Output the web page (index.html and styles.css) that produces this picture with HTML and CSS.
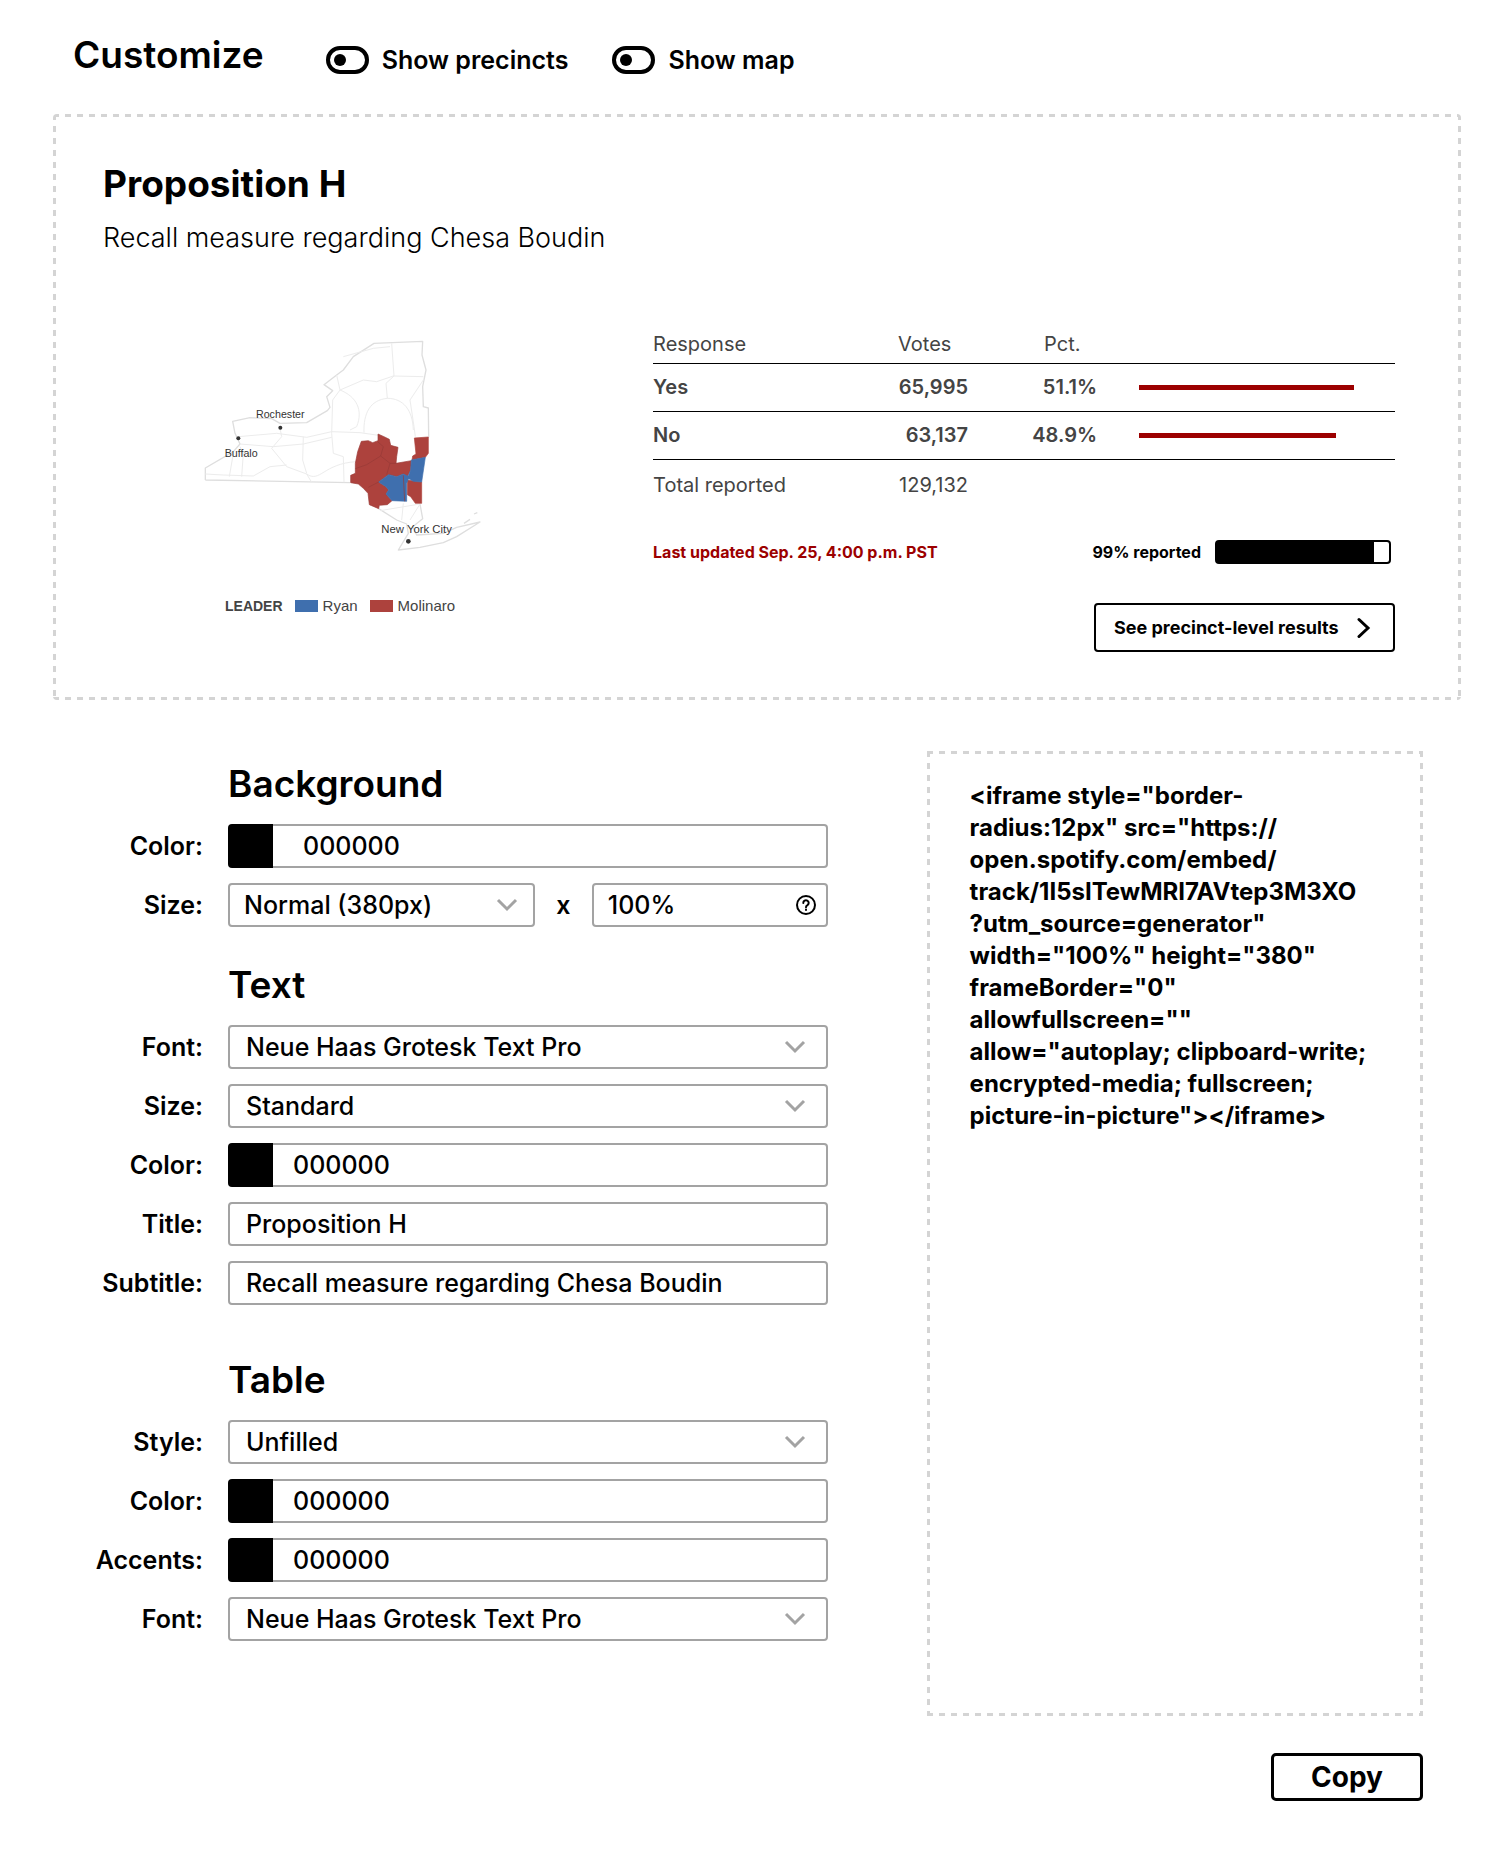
FILE: index.html
```html
<!DOCTYPE html>
<html lang="en">
<head>
<meta charset="utf-8">
<meta name="viewport" content="width=device-width, initial-scale=1">
<title>Customize embed</title>
<link rel="stylesheet" href="styles.css">
</head>
<body>
<main class="page">
  <header class="topbar">
    <h1 class="heading">Customize</h1>
    <label class="toggle"><input type="checkbox" class="toggle-input">Show precincts</label>
    <label class="toggle"><input type="checkbox" class="toggle-input">Show map</label>
  </header>

  <section class="preview dashed">
    <h2 class="preview-title">Proposition H</h2>
    <p class="preview-subtitle">Recall measure regarding Chesa Boudin</p>
    <div class="preview-body">
      <figure class="map">
        <svg class="map-svg" viewBox="0 0 900 720" role="img" aria-label="Map of New York counties by leader">
          <g fill="none" stroke="#dedede" stroke-width="4" stroke-linejoin="round">
            <path d="M46 480V444L130 395L150 372L135 340L128 304L180 293L245 296L270 310L350 308L412 272L420 262L410 230L428 212L402 194L440 165L460 150L490 110L552 70L698 64L696 105L708 150L698 200L700 260L715 264L716 352M46 480L480 488M566 566L620 600L650 612L655 640L625 690L690 682L760 668L800 650L870 606L800 622L760 640L680 645L668 620L698 596L690 552"/>
            <path d="M822 610L840 598M852 582L862 578"/>
          </g>
          <g fill="none" stroke="#ececec" stroke-width="3">
            <path d="M145 350L260 340L350 352L425 335L510 338L566 346M425 340L428 240L450 210L520 180L560 185L610 168L700 170M450 210L440 165M450 210C500 230 520 270 500 320L480 330M605 70L612 168L588 190L592 235C540 240 520 280 522 338M592 235C640 235 668 270 670 330M700 180L660 240L672 320L676 350M270 325L275 350L245 385L290 440L350 462L365 487M340 350L338 420L350 460M425 340L430 400L460 410L462 487M150 380L160 400L155 470M46 462L100 465L190 468L240 440L290 435M350 462C390 490 400 430 500 425M130 400L118 470M460 110L550 85L600 80M640 550L635 600M690 552L660 600M570 572L690 552M150 372L250 380L340 372L425 352"/>
          </g>
          <g stroke-width="2" stroke-linejoin="round">
            <path fill="#ad423d" stroke="#9c3d3a" d="M482 488V466L496 460V430L503 395L514 364L535 362L548 368L564 362V342L582 350L598 358L602 376L624 382L620 410L618 430L664 422L662 450L652 470L640 462L620 470L596 464L566 486L588 500L596 510L588 522L606 542L592 554L568 556L566 566L538 554L534 520L520 505L505 492Z"/>
            <path fill="#ad423d" stroke="#ad423d" d="M673 354L715 351V400L706 412L666 420L668 408L678 402Z"/>
            <path fill="#ad423d" stroke="#ad423d" d="M652 480L695 486V550L676 550L662 530L652 524Z"/>
            <path fill="#3f6fae" stroke="#3f6fae" d="M664 420L706 412L695 486L670 484L652 474L662 450Z"/>
            <path fill="#3f6fae" stroke="#3f6fae" d="M566 486L596 464L620 470L640 462L658 470L650 490V544L606 542L588 522L596 510L588 500Z"/>
            <path fill="none" stroke="#963a37" d="M496 446L530 434L572 408L600 430L590 464M564 366L580 380L572 408M600 430L620 430M535 502L566 486M640 466L644 544"/>
          </g>
          <g fill="#333">
            <circle cx="271" cy="323" r="6"/><circle cx="145" cy="355" r="6"/><circle cx="655" cy="664" r="7"/>
            <g font-size="32"><text x="198" y="295">Rochester</text><text x="104" y="410">Buffalo</text><text x="574" y="640" font-size="34">New York City</text></g>
          </g>
        </svg>
        <figcaption class="legend">
          <strong class="legend-title">LEADER</strong>
          <span class="legend-item"><span class="chip chip-blue"></span>Ryan</span>
          <span class="legend-item"><span class="chip chip-red"></span>Molinaro</span>
        </figcaption>
      </figure>

      <div class="results">
        <table class="results-table">
          <colgroup><col class="col-response"><col class="col-votes"><col class="col-pct"><col></colgroup>
          <thead>
            <tr><th scope="col">Response</th><th scope="col" class="head-votes">Votes</th><th scope="col" class="head-pct">Pct.</th><th></th></tr>
          </thead>
          <tbody>
            <tr><th scope="row">Yes</th><td>65,995</td><td>51.1%</td><td class="bar-cell"><div class="bar" style="width:84%"></div></td></tr>
            <tr><th scope="row">No</th><td>63,137</td><td>48.9%</td><td class="bar-cell"><div class="bar" style="width:77%"></div></td></tr>
          </tbody>
          <tfoot>
            <tr><th scope="row">Total reported</th><td>129,132</td><td></td><td></td></tr>
          </tfoot>
        </table>
        <div class="status">
          <span class="updated">Last updated Sep. 25, 4:00 p.m. PST</span>
          <span class="reported">99% reported <span class="progress"><span class="progress-fill" style="width:91%"></span></span></span>
        </div>
        <button type="button" class="precinct-button">See precinct-level results
          <svg width="14" height="22" viewBox="0 0 14 22" fill="none" stroke="#000" stroke-width="3" stroke-linecap="round"><path d="M2 2.500L11 11L2 19.500"/></svg>
        </button>
      </div>
    </div>
  </section>

  <div class="editor">
    <form class="settings">
      <fieldset class="group">
        <legend class="heading">Background</legend>
        <label class="label" for="bg-color">Color:</label>
        <div class="color-field"><span class="swatch"></span><input class="control color-input color-input-wide" id="bg-color" type="text" value="000000"></div>
        <label class="label" for="bg-size">Size:</label>
        <div class="size-row">
          <div class="select"><select class="control" id="bg-size"><option>Normal (380px)</option></select><svg class="caret" viewBox="0 0 22 14"><path d="M2 2L11 11L20 2"/></svg></div>
          <span class="times">x</span>
          <div class="help-field"><input class="control" type="text" value="100%" aria-label="Height"><svg class="help" viewBox="0 0 22 22"><circle cx="11" cy="11" r="9"/><path d="M8.300 9a2.700 2.700 0 1 1 4.200 2.200c-1 .6-1.500 1-1.500 2"/><path d="M11 15.500v.4"/></svg></div>
        </div>
      </fieldset>

      <fieldset class="group">
        <legend class="heading">Text</legend>
        <label class="label" for="text-font">Font:</label>
        <div class="select"><select class="control" id="text-font"><option>Neue Haas Grotesk Text Pro</option></select><svg class="caret" viewBox="0 0 22 14"><path d="M2 2L11 11L20 2"/></svg></div>
        <label class="label" for="text-size">Size:</label>
        <div class="select"><select class="control" id="text-size"><option>Standard</option></select><svg class="caret" viewBox="0 0 22 14"><path d="M2 2L11 11L20 2"/></svg></div>
        <label class="label" for="text-color">Color:</label>
        <div class="color-field"><span class="swatch"></span><input class="control color-input" id="text-color" type="text" value="000000"></div>
        <label class="label" for="text-title">Title:</label>
        <input class="control" id="text-title" type="text" value="Proposition H">
        <label class="label" for="text-subtitle">Subtitle:</label>
        <input class="control" id="text-subtitle" type="text" value="Recall measure regarding Chesa Boudin">
      </fieldset>

      <fieldset class="group group-table">
        <legend class="heading">Table</legend>
        <label class="label" for="table-style">Style:</label>
        <div class="select"><select class="control" id="table-style"><option>Unfilled</option></select><svg class="caret" viewBox="0 0 22 14"><path d="M2 2L11 11L20 2"/></svg></div>
        <label class="label" for="table-color">Color:</label>
        <div class="color-field"><span class="swatch"></span><input class="control color-input" id="table-color" type="text" value="000000"></div>
        <label class="label" for="table-accents">Accents:</label>
        <div class="color-field"><span class="swatch"></span><input class="control color-input" id="table-accents" type="text" value="000000"></div>
        <label class="label" for="table-font">Font:</label>
        <div class="select"><select class="control" id="table-font"><option>Neue Haas Grotesk Text Pro</option></select><svg class="caret" viewBox="0 0 22 14"><path d="M2 2L11 11L20 2"/></svg></div>
      </fieldset>
    </form>

    <aside class="embed">
      <pre class="code dashed"><code>&lt;iframe style="border-
radius:12px" src="https://
open.spotify.com/embed/
track/1I5sITewMRI7AVtep3M3XO
?utm_source=generator"
width="100%" height="380"
frameBorder="0"
allowfullscreen=""
allow="autoplay; clipboard-write;
encrypted-media; fullscreen;
picture-in-picture"&gt;&lt;/iframe&gt;</code></pre>
      <button type="button" class="copy-button">Copy</button>
    </aside>
  </div>
</main>
</body>
</html>
```
FILE: styles.css
```css
* { box-sizing: border-box; }

body {
  margin: 0;
  background: #fff;
  color: #000;
  font-family: Inter, "Liberation Sans", sans-serif;
}

h1, h2, p, figure, pre, fieldset { margin: 0; }
button, input, select { font: inherit; color: inherit; }

.page { padding: 31px 33px 53px 53px; }

.heading {
  padding: 0;
  font-size: 37px;
  font-weight: 600;
  line-height: 48px;
}

.dashed {
  --dash: #d4d4d4 0 6px, transparent 6px 12px;
  background:
    repeating-linear-gradient(90deg, var(--dash)) top / 100% 3px no-repeat,
    repeating-linear-gradient(90deg, var(--dash)) bottom / 100% 3px no-repeat,
    repeating-linear-gradient(180deg, var(--dash)) left / 3px 100% no-repeat,
    repeating-linear-gradient(180deg, var(--dash)) right / 3px 100% no-repeat;
}

/* Top bar */
.topbar {
  display: flex;
  align-items: flex-end;
  padding: 0 0 35px 20px;
}
.topbar .heading { margin-right: 62px; }
.toggle {
  display: flex;
  align-items: center;
  gap: 13px;
  margin-right: 44px;
  font-size: 25px;
  font-weight: 600;
  line-height: 38px;
}
.toggle-input {
  appearance: none;
  display: flex;
  align-items: center;
  width: 43px;
  height: 28px;
  margin: 0;
  padding-left: 4px;
  border: 4px solid #000;
  border-radius: 14px;
}
.toggle-input::before {
  content: "";
  width: 12px;
  height: 12px;
  border-radius: 50%;
  background: #000;
}
.toggle-input:checked::before { margin-left: 15px; }

/* Preview card */
.preview { padding: 46px 66px 48px 50px; border-radius: 4px; }
.preview-title { font-size: 37px; font-weight: 700; line-height: 48px; }
.preview-subtitle { margin-top: 10px; font-size: 27px; font-weight: 300; line-height: 40px; }
.preview-body {
  display: grid;
  grid-template-columns: 43fr 58fr;
  margin-top: 62px;
}
.map { padding-left: 87px; font-family: "Liberation Sans", sans-serif; }
.map-svg { display: block; width: 300px; }
.legend {
  display: flex;
  align-items: center;
  gap: 12px;
  margin-top: 36px;
  padding-left: 35px;
  color: #444;
  font-size: 15px;
  line-height: 20px;
}
.legend-title { font-size: 14px; }
.legend-item { display: flex; align-items: center; gap: 5px; }
.chip { width: 23px; height: 12px; }
.chip-blue { background: #3f6fae; }
.chip-red { background: #ad423d; }

.results { display: flex; flex-direction: column; padding-top: 5px; }
.results-table {
  width: 100%;
  border-collapse: collapse;
  table-layout: fixed;
  color: #444;
  font-size: 20px;
  line-height: 24px;
}
.col-response { width: 245px; }
.col-votes { width: 70px; }
.col-pct { width: 129px; }
.results-table th { padding: 0; font-weight: 400; text-align: left; white-space: nowrap; }
.results-table td { padding: 0; text-align: right; }
.results-table thead th { height: 38px; }
.results-table .head-pct { padding-left: 76px; }
.results-table tbody th, .results-table tbody td { height: 48px; font-weight: 600; }
.results-table tfoot th, .results-table tfoot td { height: 52px; }
.results-table thead tr, .results-table tbody tr { border-bottom: 1px solid #000; }
.results-table .bar-cell { padding-left: 42px; }
.bar { height: 5px; background: #9c0000; }

.status {
  display: flex;
  align-items: center;
  justify-content: space-between;
  margin-top: 29px;
  padding-right: 4px;
  font-size: 16px;
  font-weight: 700;
  line-height: 24px;
}
.updated { color: #9c0000; }
.reported { display: flex; align-items: center; gap: 14px; }
.progress {
  width: 176px;
  height: 24px;
  border: 2px solid #000;
  border-radius: 4px;
}
.progress-fill { display: block; height: 100%; background: #000; }
.precinct-button {
  display: flex;
  align-items: center;
  justify-content: space-between;
  align-self: flex-end;
  width: 301px;
  height: 49px;
  margin-top: 39px;
  padding: 0 22px 0 18px;
  border: 2px solid #000;
  border-radius: 4px;
  background: #fff;
  font-size: 18px;
  font-weight: 700;
}

/* Editor */
.editor {
  display: grid;
  grid-template-columns: 3fr 2fr;
  gap: 99px;
  margin-top: 51px;
  padding: 0 38px 0 30px;
}
.settings { padding-top: 9px; }
.group {
  display: grid;
  grid-template-columns: 120px minmax(0, 1fr);
  column-gap: 25px;
  row-gap: 15px;
  align-items: center;
  min-width: 0;
  padding: 0;
  border: 0;
  margin-bottom: 34px;
}
.group .heading { margin: 0 0 16px 145px; }
.group-table { margin-top: 51px; margin-bottom: 0; }
.label { font-size: 25px; font-weight: 600; line-height: 32px; text-align: right; }
.control {
  appearance: none;
  width: 100%;
  min-width: 0;
  height: 44px;
  padding: 0 16px;
  border: 2px solid #a3a3a3;
  border-radius: 4px;
  background: #fff;
  font-size: 25px;
  font-weight: 500;
}
.color-field { display: flex; }
.swatch {
  flex: none;
  width: 45px;
  height: 44px;
  border-radius: 4px 0 0 4px;
  background: #000;
}
.color-input { padding-left: 20px; border-left: 0; border-radius: 0 4px 4px 0; }
.color-input-wide { padding-left: 30px; }
.select, .help-field { display: grid; align-items: center; }
.select > *, .help-field > * { grid-area: 1 / 1; }
.caret {
  justify-self: end;
  width: 22px;
  margin-right: 22px;
  fill: none;
  stroke: #a3a3a3;
  stroke-width: 3;
  pointer-events: none;
}
.size-row {
  display: grid;
  grid-template-columns: 307fr 57px 236fr;
  align-items: center;
}
.size-row .caret { margin-right: 17px; }
.size-row .control { padding: 0 14px; }
.times { font-size: 25px; font-weight: 600; text-align: center; }
.help {
  justify-self: end;
  width: 22px;
  margin-right: 11px;
  fill: none;
  stroke: #000;
  stroke-width: 2;
  stroke-linecap: round;
}

.embed { display: flex; flex-direction: column; }
.code {
  min-height: 965px;
  padding: 29px 43px;
  overflow: hidden;
  font-family: inherit;
  font-size: 24px;
  font-weight: 700;
  line-height: 32px;
}
.code code { font: inherit; }
.copy-button {
  align-self: flex-end;
  width: 152px;
  height: 48px;
  margin-top: 37px;
  border: 3px solid #000;
  border-radius: 5px;
  background: #fff;
  font-size: 28px;
  font-weight: 700;
}
```
